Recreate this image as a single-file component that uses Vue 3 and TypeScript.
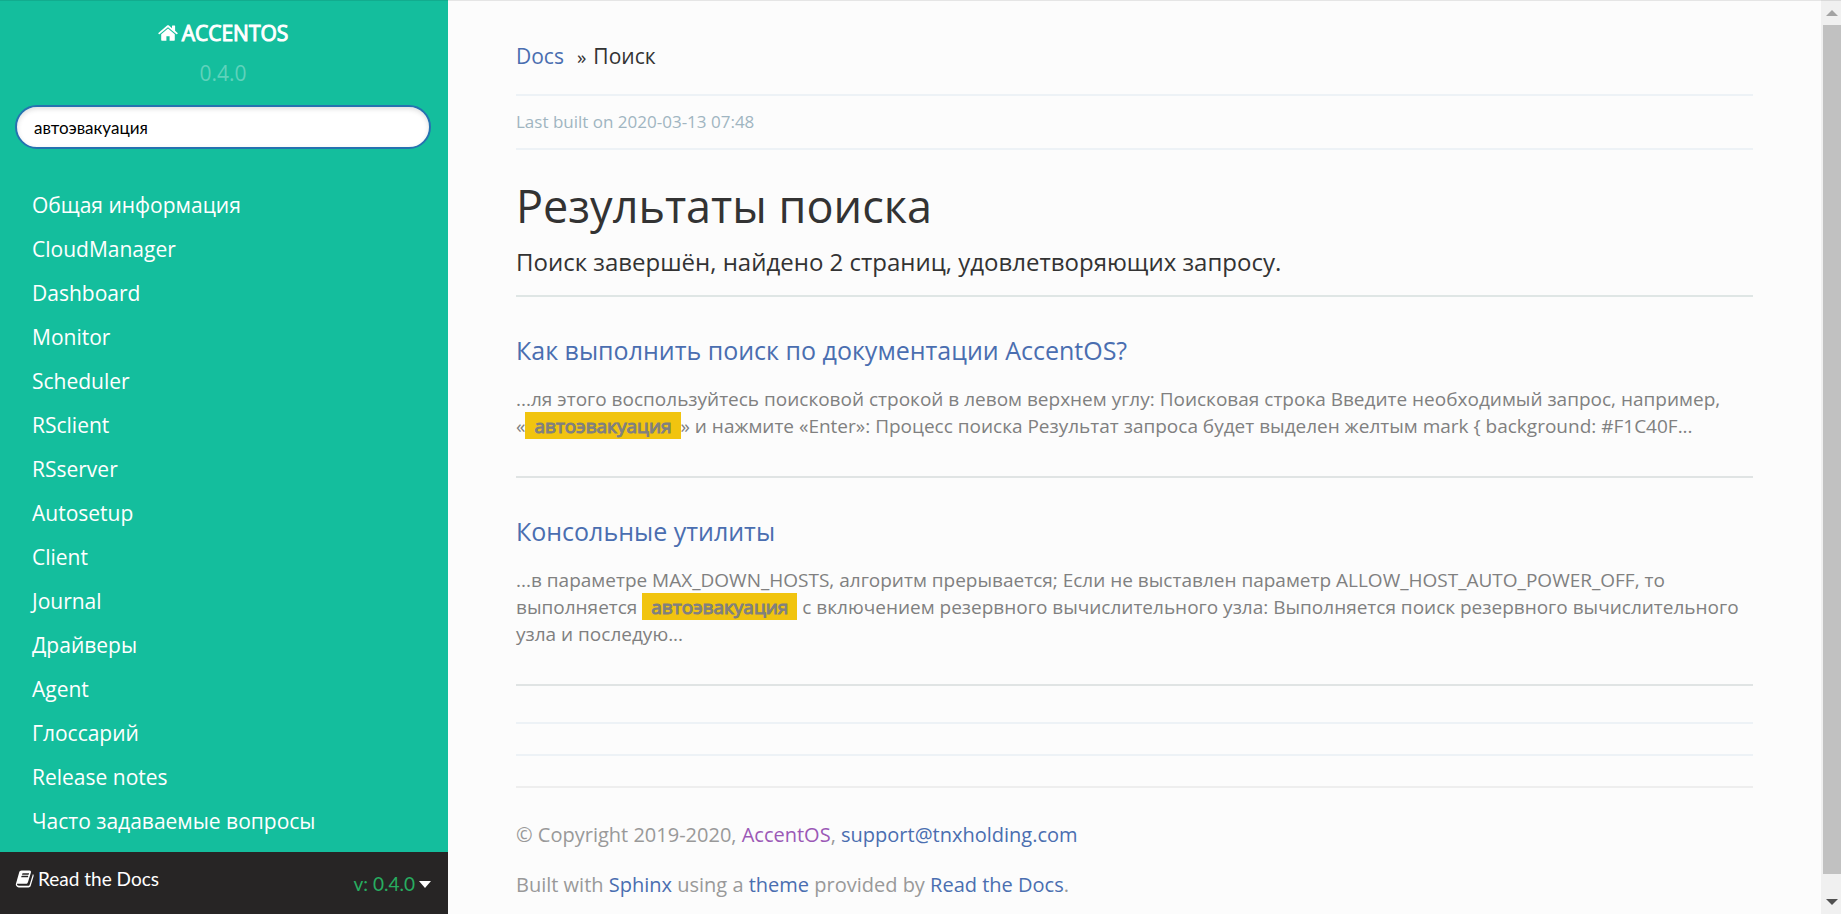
<script setup lang="ts">
import { ref } from 'vue'

interface Part {
  text: string
  mark?: boolean
}

interface SearchResult {
  title: string
  parts: Part[]
}

const query = ref<string>('автоэвакуация')

const menu: string[] = [
  'Общая информация',
  'CloudManager',
  'Dashboard',
  'Monitor',
  'Scheduler',
  'RSclient',
  'RSserver',
  'Autosetup',
  'Client',
  'Journal',
  'Драйверы',
  'Agent',
  'Глоссарий',
  'Release notes',
  'Часто задаваемые вопросы',
]

const results: SearchResult[] = [
  {
    title: 'Как выполнить поиск по документации AccentOS?',
    parts: [
      { text: '...ля этого воспользуйтесь поисковой строкой в левом верхнем углу: Поисковая строка Введите необходимый запрос, например, «' },
      { text: 'автоэвакуация', mark: true },
      { text: '» и нажмите «Enter»: Процесс поиска Результат запроса будет выделен желтым mark { background: #F1C40F...' },
    ],
  },
  {
    title: 'Консольные утилиты',
    parts: [
      { text: '...в параметре MAX_DOWN_HOSTS, алгоритм прерывается; Если не выставлен параметр ALLOW_HOST_AUTO_POWER_OFF, то выполняется ' },
      { text: 'автоэвакуация', mark: true },
      { text: ' с включением резервного вычислительного узла: Выполняется поиск резервного вычислительного узла и последую...' },
    ],
  },
]
</script>

<template>
  <div class="page">
    <aside class="sidebar">
      <div class="side-head">
        <a class="brand" href="#">
          <svg class="home" viewBox="0 0 20 16" aria-hidden="true">
            <path d="M10 3.6 3.2 9.3v5.8c0 .4.3.7.7.7h4.5v-4.6h3.2v4.6h4.5c.4 0 .7-.3.7-.7V9.3z" />
            <path d="m19.6 7.9-2.5-2.1V1c0-.2-.2-.4-.4-.4h-2.3c-.2 0-.4.2-.4.4v2.2L11.2.8c-.7-.6-1.7-.6-2.4 0L.4 7.9c-.2.1-.2.4-.1.5l.7.8c.1.2.4.2.5.1L10 2.2l8.5 7.1c.2.1.4.1.5-.1l.7-.8c.1-.1.1-.4-.1-.5z" />
          </svg>
          <span>ACCENTOS</span>
        </a>
        <div class="version">0.4.0</div>
        <input v-model="query" class="search" type="text" aria-label="Поиск" />
      </div>
      <nav class="menu">
        <a v-for="item in menu" :key="item" href="#">{{ item }}</a>
      </nav>
      <button class="rtd" type="button">
        <span class="rtd-name">
          <svg class="book" viewBox="0 0 18 17" aria-hidden="true">
            <path fill-rule="evenodd" d="M17.3 4.1c.4.5.5 1.2.3 1.9l-2.7 8.9c-.3.9-1.2 1.6-2.1 1.6H3.7c-1.2 0-2.4-.9-2.8-2-.2-.5-.2-1 0-1.4L3.8 2.800C4.2 1.2 5 .5 6.2.5h7.5c1.1 0 1.7.8 1.4 1.9l-2.7 8.8c-.5 1.6-1 1.9-2.3 1.9H1.9c-.2.4 0 1.8 1.9 1.8h9.1c.4 0 .8-.2.9-.6l2.9-9.7c.1-.2.1-.5.1-.7.2.1.4.1.5.2zM6.7 4.1c-.1.2 0 .4.2.4h5.7c.2 0 .5-.2.5-.4l.2-.6c.1-.2 0-.4-.2-.4H7.400c-.2 0-.5.2-.5.4zM5.900 6.500c-.1.2 0 .4.2.4h5.700c.2 0 .5-.2.5-.4l.2-.6c.1-.2 0-.4-.2-.4H6.600c-.2 0-.5.2-.5.4z" />
          </svg>
          <span>Read the Docs</span>
        </span>
        <span class="rtd-version">
          <span>v: 0.4.0</span>
          <svg class="caret" viewBox="0 0 12 7" aria-hidden="true"><path d="M0 0h12L6 7z" /></svg>
        </span>
      </button>
    </aside>

    <main class="content">
      <div class="crumbs">
        <a href="#">Docs</a>
        <span class="sep">»</span>
        <span>Поиск</span>
      </div>
      <p class="built">Last built on 2020-03-13 07:48</p>
      <h1>Результаты поиска</h1>
      <p class="summary">Поиск завершён, найдено 2 страниц, удовлетворяющих запросу.</p>
      <article v-for="r in results" :key="r.title" class="result">
        <h2><a href="#">{{ r.title }}</a></h2>
        <p><template v-for="(p, i) in r.parts" :key="i"><mark v-if="p.mark">{{ p.text }}</mark><template v-else>{{ p.text }}</template></template></p>
      </article>
      <div class="rule rule-cool"></div>
      <div class="rule rule-cool"></div>
      <div class="rule"></div>
      <footer>
        <p>© Copyright 2019-2020, <a class="visited" href="#">AccentOS</a>, <a href="#">support@tnxholding.com</a></p>
        <p>Built with <a href="#">Sphinx</a> using a <a href="#">theme</a> provided by <a href="#">Read the Docs</a>.</p>
      </footer>
    </main>

    <div class="scrollbar" aria-hidden="true">
      <svg class="arrow up" viewBox="0 0 12 6"><path d="M0 6h12L6 0z" /></svg>
      <div class="thumb"></div>
      <svg class="arrow down" viewBox="0 0 12 6"><path d="M0 0h12L6 6z" /></svg>
    </div>
  </div>
</template>

<style>
body {
  margin: 0;
  background: #fcfcfc;
}
</style>

<style scoped>
* {
  box-sizing: border-box;
}

.page {
  position: relative;
  display: grid;
  grid-template-columns: 448px 1fr 20px;
  height: 100vh;
  overflow: hidden;
  font-family: "Open Sans", "Noto Sans", sans-serif;
  color: #333;
  background: #fcfcfc;
}

.page::after {
  content: "";
  position: absolute;
  inset: 0 0 auto;
  height: 1px;
  background: rgba(0, 0, 0, 0.09);
}

a {
  color: #4a6eb0;
  text-decoration: none;
}

h1,
h2,
p {
  margin: 0;
  font-weight: 400;
}

.sidebar {
  display: flex;
  flex-direction: column;
  min-height: 0;
  background: #14be9d;
}

.side-head {
  display: flex;
  flex-direction: column;
  align-items: center;
  padding: 15px 17px 0 15px;
}

.brand {
  display: flex;
  align-items: center;
  gap: 4px;
  color: #fff;
  font-size: 21px;
  line-height: 36px;
  -webkit-text-stroke: 1px #fff;
}

.home {
  width: 20px;
  height: 16px;
  fill: #fff;
}

.version {
  margin-top: 4px;
  font-size: 21px;
  line-height: 36px;
  color: #5fd2bb;
}

.search {
  width: 100%;
  height: 44px;
  margin-top: 14px;
  padding: 0 17px;
  border: 2px solid #2672b0;
  border-radius: 22px;
  outline: none;
  background: #fff;
  box-shadow: inset 0 2px 5px rgba(0, 0, 0, 0.13);
  font-family: Lato, sans-serif;
  font-size: 17px;
  color: #000;
}

.menu {
  display: flex;
  flex: 1;
  flex-direction: column;
  min-height: 0;
  margin-top: 34px;
  overflow: hidden;
}

.menu a {
  flex: none;
  padding-left: 32px;
  font-size: 21px;
  line-height: 44px;
  color: #fff;
}

.rtd {
  display: flex;
  flex: none;
  justify-content: space-between;
  width: 100%;
  height: 62px;
  padding: 15px 17px 0 15px;
  border: 0;
  background: #272525;
  font-family: Lato, sans-serif;
  font-size: 19px;
  line-height: 24px;
  color: #fff;
}

.rtd-name,
.rtd-version {
  display: flex;
  align-items: center;
  align-self: flex-start;
  gap: 4px;
}

.rtd-version {
  padding-top: 5px;
  color: #27ae60;
}

.book {
  width: 19px;
  height: 18px;
  fill: #fff;
}

.caret {
  width: 12px;
  height: 7px;
  fill: #fff;
}

.content {
  min-width: 0;
  padding: 0 68px;
}

.crumbs {
  display: flex;
  align-items: baseline;
  padding: 40px 0 22px;
  border-bottom: 2px solid #edf2f6;
  font-size: 21px;
  line-height: 32px;
}

.sep {
  margin: 0 7px 0 13px;
  font-size: 19px;
  line-height: 20px;
}

.built {
  padding: 11px 0;
  border-bottom: 2px solid #edf2f6;
  font-size: 17px;
  line-height: 30px;
  color: #a0b5c1;
}

h1 {
  padding-top: 24px;
  font-size: 45px;
  line-height: 64px;
}

.summary {
  padding: 8px 0 17px;
  border-bottom: 2px solid #dfe6e5;
  font-size: 24px;
  line-height: 32px;
}

.result {
  padding: 37px 0 36px;
  border-bottom: 2px solid #e0e4e4;
}

h2 {
  margin-bottom: 20px;
  font-size: 25px;
  line-height: 32px;
}

.result p {
  font-size: 19px;
  line-height: 27px;
  color: #808080;
}

mark {
  padding: 1px 9px 0;
  background: #f1c40f;
  color: #808080;
  -webkit-text-stroke: 1px #808080;
}

.rule {
  height: 2px;
  margin-top: 30px;
  background: #eee;
}

.result + .rule {
  margin-top: 36px;
}

.rule-cool {
  background: #edf2f6;
}

footer {
  padding-top: 32px;
  font-size: 20px;
  line-height: 30px;
  color: #999;
}

footer p + p {
  margin-top: 20px;
}

.visited {
  color: #9b59b6;
}

.scrollbar {
  display: flex;
  flex-direction: column;
  align-items: center;
  padding: 10px 0 9px 2px;
  background: #f0f0f0;
}

.thumb {
  flex: 1;
  width: 100%;
  margin: 9px 0 25px;
  background: #c1c1c1;
}

.arrow {
  flex: none;
  width: 12px;
  height: 6px;
}

.up {
  fill: #a3a3a3;
}

.down {
  fill: #505050;
}
</style>
